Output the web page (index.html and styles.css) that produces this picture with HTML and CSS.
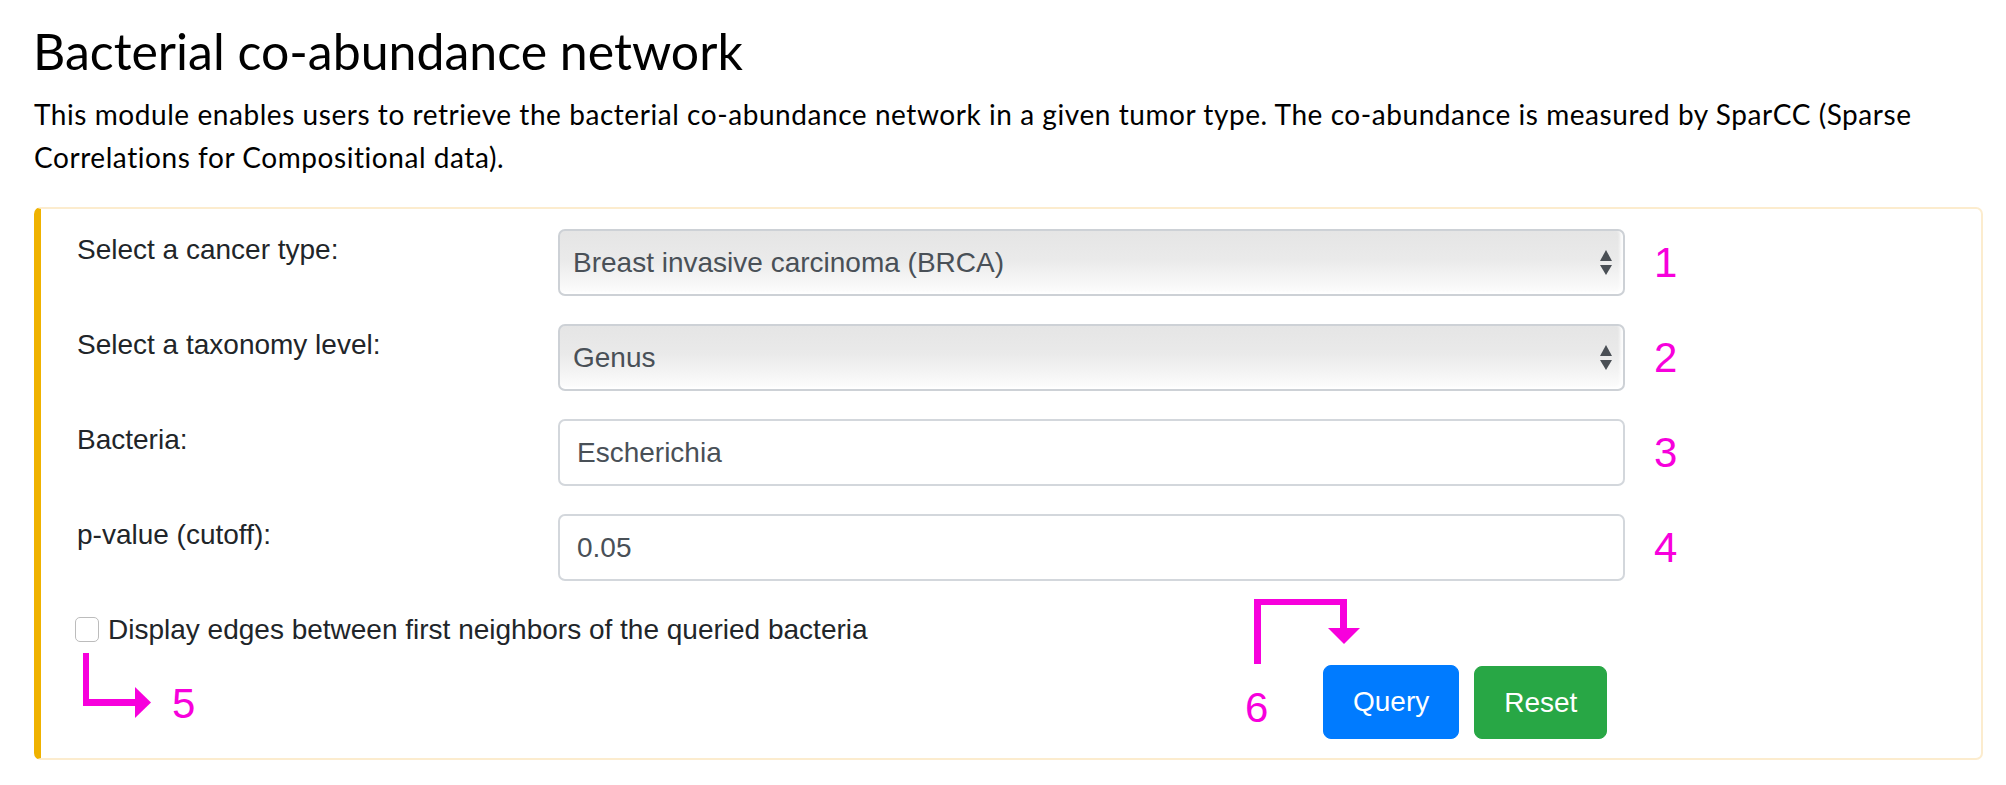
FILE: index.html
```html
<!DOCTYPE html>
<html lang="en">
<head>
<meta charset="utf-8">
<title>Bacterial co-abundance network</title>
<link rel="stylesheet" href="styles.css">
</head>
<body>
<div class="page">
  <h1 class="title">Bacterial co-abundance network</h1>
  <p class="intro">This module enables users to retrieve the bacterial co-abundance network in a given tumor type. The co-abundance is measured by SparCC (Sparse Correlations for Compositional data).</p>

  <section class="panel">
    <div class="form-row">
      <label class="form-label">Select a cancer type:</label>
      <div class="select">
        <span>Breast invasive carcinoma (BRCA)</span>
        <svg class="updown" width="12" height="25" viewBox="0 0 12 25"><polygon points="0,11 6,0 12,11"/><polygon points="0,15 12,15 6,25"/></svg>
      </div>
      <span class="mark">1</span>
    </div>
    <div class="form-row">
      <label class="form-label">Select a taxonomy level:</label>
      <div class="select">
        <span>Genus</span>
        <svg class="updown" width="12" height="25" viewBox="0 0 12 25"><polygon points="0,11 6,0 12,11"/><polygon points="0,15 12,15 6,25"/></svg>
      </div>
      <span class="mark">2</span>
    </div>
    <div class="form-row">
      <label class="form-label">Bacteria:</label>
      <input class="input" type="text" value="Escherichia">
      <span class="mark">3</span>
    </div>
    <div class="form-row">
      <label class="form-label">p-value (cutoff):</label>
      <input class="input" type="text" value="0.05">
      <span class="mark">4</span>
    </div>
    <div class="check-row">
      <span class="checkbox"></span>
      <span>Display edges between first neighbors of the queried bacteria</span>
    </div>
    <div class="actions">
      <button class="btn btn-primary">Query</button>
      <button class="btn btn-success">Reset</button>
    </div>
  </section>

  <svg class="annotations" width="2006" height="785" viewBox="0 0 2006 785">
    <rect x="83" y="653" width="6" height="53"/>
    <rect x="83" y="699" width="53" height="7"/>
    <polygon points="135,687 151,702.5 135,718"/>
    <rect x="1254" y="599" width="7" height="65"/>
    <rect x="1254" y="599" width="93" height="6"/>
    <rect x="1340" y="599" width="7" height="30"/>
    <polygon points="1328,628 1360,628 1344,644"/>
  </svg>
  <span class="mark mark-abs mark-5">5</span>
  <span class="mark mark-abs mark-6">6</span>
</div>
</body>
</html>
```

FILE: styles.css
```css
html, body {
  margin: 0;
  background: #fff;
}

.page {
  position: relative;
  padding: 21px 23px 0 34px;
  font-family: "Liberation Sans", Arial, Helvetica, sans-serif;
  height: 785px;
  box-sizing: border-box;
}

.title {
  font-family: Lato, "Open Sans", sans-serif;
  font-weight: 400;
  font-size: 50px;
  line-height: 60px;
  margin: 0 0 12px -1px;
  color: #000;
}

.intro {
  font-family: Lato, "Open Sans", sans-serif;
  font-size: 28px;
  letter-spacing: 0.56px;
  line-height: 43px;
  margin: 0;
  color: #000;
}

.panel {
  margin-top: 28px;
  border: 2px solid #fcecce;
  border-left: 7px solid #efb200;
  border-radius: 7px;
  padding: 20px 0 19px 36px;
}

.form-row {
  display: grid;
  grid-template-columns: 481px 1067px auto;
  margin-bottom: 28px;
}

.form-label {
  font-size: 28px;
  line-height: 42px;
  color: #212529;
}

.select {
  height: 67px;
  box-sizing: border-box;
  border: 2px solid #cdd1d6;
  border-radius: 7px;
  background: linear-gradient(to bottom, #e5e5e5 0%, #eaeaea 45%, #f6f6f6 80%, #fdfdfd 100%);
  box-shadow: inset -3px -2px 3px rgba(255, 255, 255, 0.9);
  display: flex;
  align-items: center;
  justify-content: space-between;
  padding: 0 11px 0 13px;
  font-size: 28px;
  line-height: 42px;
  color: #495057;
}

.updown {
  fill: #4a4f55;
  display: block;
}

.input {
  height: 67px;
  width: 100%;
  box-sizing: border-box;
  border: 2px solid #d3d7dc;
  border-radius: 7px;
  padding: 0 17px;
  margin: 0;
  font-family: inherit;
  font-size: 28px;
  line-height: 42px;
  color: #495057;
  background: #fff;
  outline: none;
}

.mark {
  color: #f700dc;
  font-family: "Liberation Sans", Arial, sans-serif;
  font-size: 42px;
  line-height: 67px;
  margin-left: 29px;
}

.check-row {
  display: flex;
  align-items: flex-start;
  height: 42px;
  font-size: 28px;
  line-height: 42px;
  color: #212529;
}

.checkbox {
  width: 24px;
  height: 25px;
  box-sizing: border-box;
  border: 1.5px solid #bcbcbc;
  border-radius: 5px;
  margin: 8px 9px 0 -2px;
  background: #fff;
  flex: none;
}

.actions {
  display: flex;
  gap: 15px;
  margin-top: 14px;
  margin-left: 1246px;
}

.btn {
  font-family: inherit;
  font-size: 28px;
  line-height: 42px;
  padding: 14.5px 29px;
  border: 1px solid transparent;
  border-radius: 8px;
  color: #fff;
  cursor: pointer;
}

.btn-primary {
  background: #007bff;
  border-color: #007bff;
}

.btn-success {
  background: #28a745;
  border-color: #28a745;
  margin-top: 1px;
}

.annotations {
  position: absolute;
  left: 0;
  top: 0;
  fill: #f700dc;
  pointer-events: none;
}

.mark-abs {
  position: absolute;
  margin: 0;
  line-height: 42px;
}

.mark-5 {
  left: 172px;
  top: 683px;
}

.mark-6 {
  left: 1245px;
  top: 687px;
}
```
